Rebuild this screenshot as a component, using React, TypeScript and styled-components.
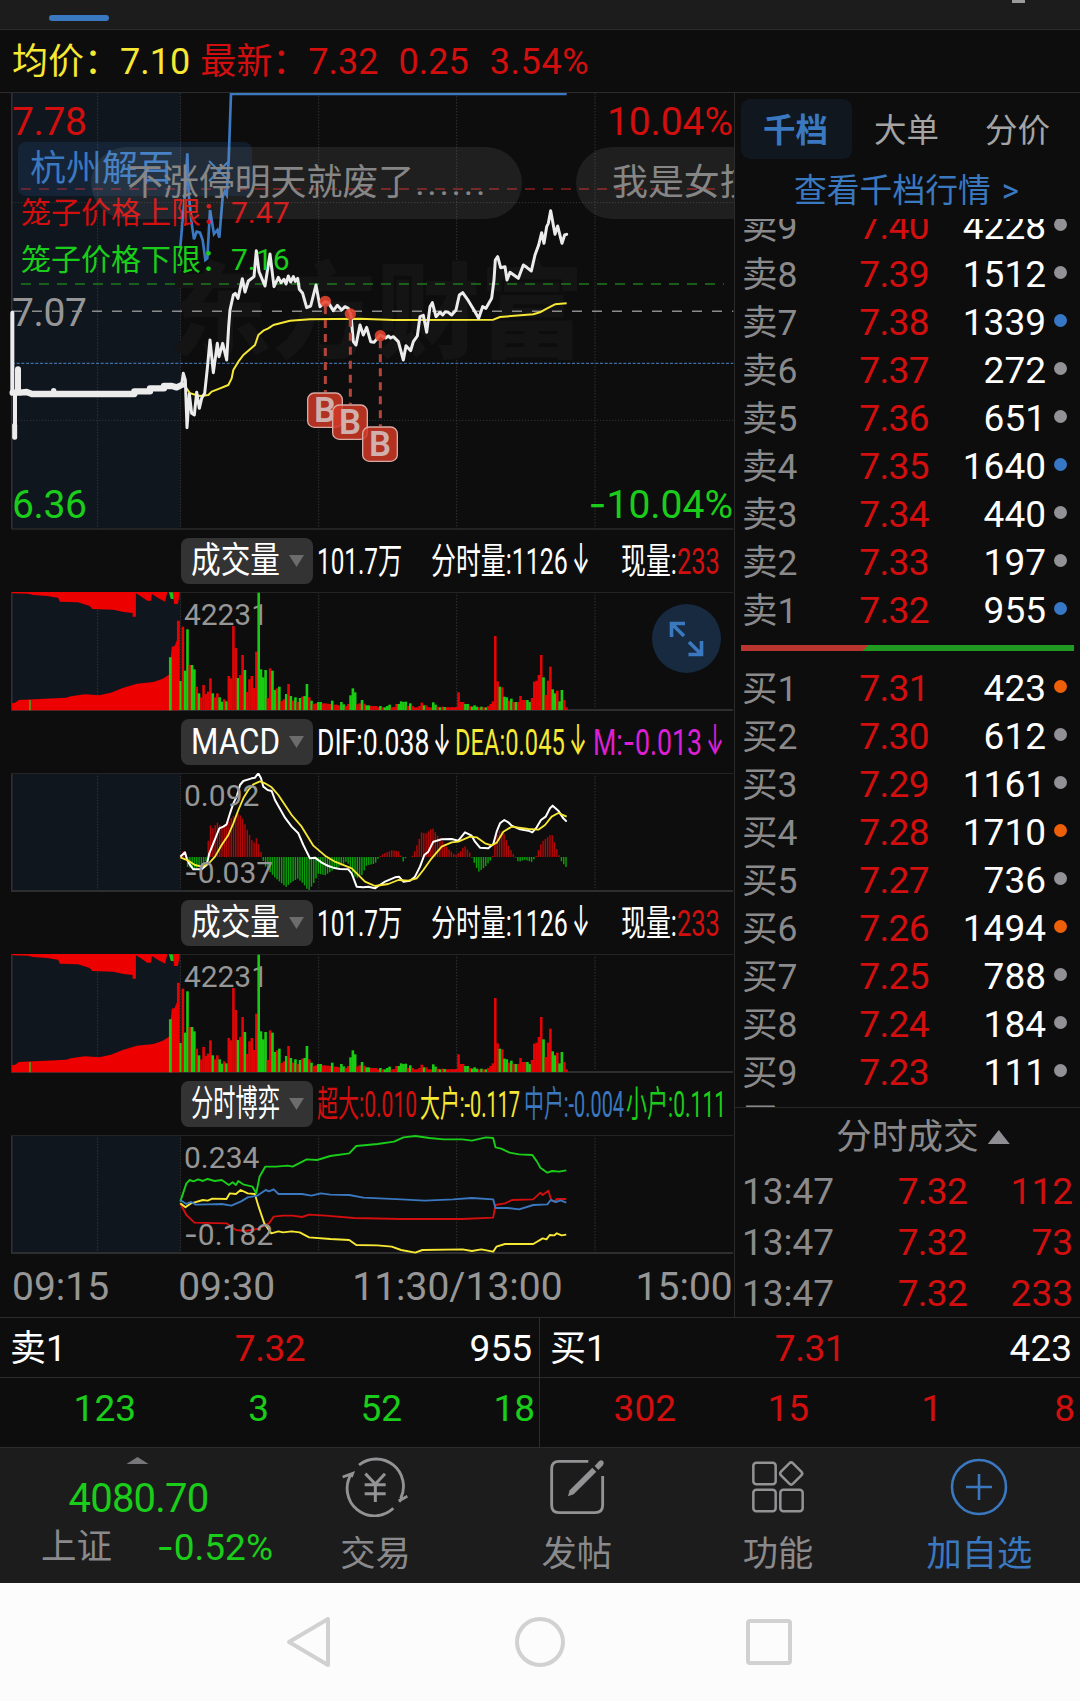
import React, { useLayoutEffect, useRef, useState } from "react";
import styled, { createGlobalStyle, css } from "styled-components";

const C = {
  bg: "#0d0d0d",
  bar: "#1c1c1c",
  line: "#2c2c2c",
  red: "#d20e0e",
  green: "#1acd1a",
  yellow: "#f7e834",
  blue: "#3a78c0",
  grey: "#969696",
  dim: "#8a8a8c",
  white: "#ffffff",
  magenta: "#dd1fd4",
  pre: "#10161e",
};

const FONT = `Roboto, "Noto Sans CJK SC", sans-serif`;

const Global = createGlobalStyle`
  html, body { margin: 0; padding: 0; background: ${C.bg}; }
  *, *::before, *::after { box-sizing: border-box; }
  svg { display: block; }
`;

/* ---------- text squeezed to a given width ---------- */

const FitBox = styled.span<{ $w: number }>`
  display: block;
  flex: none;
  width: ${(p) => p.$w}px;
  white-space: nowrap;
`;
const FitInner = styled.span`
  display: inline-block;
  transform-origin: 0 50%;
`;

function Fit({ w, children }: { w: number; children: React.ReactNode }) {
  const ref = useRef<HTMLSpanElement>(null);
  const [scale, setScale] = useState(1);
  useLayoutEffect(() => {
    if (ref.current && ref.current.offsetWidth) setScale(w / ref.current.offsetWidth);
  }, [w]);
  return (
    <FitBox $w={w}>
      <FitInner ref={ref} style={{ transform: `scaleX(${scale})` }}>
        {children}
      </FitInner>
    </FitBox>
  );
}

const Minus = styled.span`
  font-family: Inter, sans-serif;
`;
const Down = styled.span`
  font-family: Inter, sans-serif;
  font-size: 43px;
`;

/* ---------- page frame ---------- */

const Page = styled.div`
  width: 1080px;
  height: 1701px;
  overflow: hidden;
  background: ${C.bg};
  color: ${C.white};
  font: 400 37px/48px ${FONT};
  display: flex;
  flex-direction: column;
`;

const TopStrip = styled.div`
  height: 30px;
  flex: none;
  background: ${C.bar};
  border-bottom: 1px solid ${C.line};
  display: flex;
  justify-content: space-between;
  padding: 0 55px 0 49px;
`;
const ActiveMark = styled.div`
  width: 60px;
  height: 6px;
  margin-top: 15px;
  border-radius: 3px;
  background: ${C.blue};
`;
const CutGlyph = styled.div`
  width: 13px;
  height: 3px;
  background: #9a9a9a;
`;

const Quote = styled.div`
  height: 63px;
  flex: none;
  border-bottom: 1px solid ${C.line};
  display: flex;
  align-items: center;
  padding: 2px 0 0 12px;
  font-size: 36px;
`;
const QuoteItem = styled.span<{ $c: string; $gap?: number; $track?: number }>`
  color: ${(p) => p.$c};
  margin-right: ${(p) => p.$gap ?? 0}px;
  letter-spacing: ${(p) => p.$track ?? 0}px;
  white-space: nowrap;
`;

const Main = styled.div`
  height: 1225px;
  flex: none;
  display: grid;
  grid-template-columns: 735px 345px;
  border-bottom: 1px solid ${C.line};
`;
const Charts = styled.div`
  border-right: 1px solid ${C.line};
  overflow: hidden;
`;

/* ---------- main chart ---------- */

const MainChart = styled.div`
  position: relative;
  height: 437px;
  overflow: hidden;
`;
const StockTag = styled.div`
  position: absolute;
  left: 18px;
  top: 49px;
  width: 234px;
  height: 54px;
  padding-left: 12px;
  border-radius: 8px;
  background: rgba(42, 104, 176, 0.17);
  color: ${C.blue};
  font-size: 36px;
  line-height: 55px;
`;
const CloseMark = styled.svg`
  position: absolute;
  right: 22px;
  top: 18px;
`;
const Bubble = styled.div<{ $x: number; $w: number; $pad: number }>`
  position: absolute;
  left: ${(p) => p.$x}px;
  top: 54px;
  width: ${(p) => p.$w}px;
  height: 72px;
  padding-left: ${(p) => p.$pad}px;
  border-radius: 36px;
  background: rgba(255, 255, 255, 0.075);
  color: #868686;
  font-size: 35.9px;
  line-height: 73px;
  white-space: nowrap;
`;
const Dots = styled.span`
  letter-spacing: 2.7px;
  margin-left: 1px;
`;
const CageLabel = styled.div<{ $c: string; $y: number }>`
  position: absolute;
  left: 21px;
  top: ${(p) => p.$y}px;
  color: ${(p) => p.$c};
  font-size: 30px;
  line-height: 40px;
  white-space: nowrap;
`;

const Label = styled.text`
  font-family: ${FONT};
`;

const GRID_X = [97.6, 180.6, 318.7, 456.7, 595];

function Grid({ top, bottom }: { top: number; bottom: number }) {
  return (
    <g>
      <rect x={12} y={top} width={168.6} height={bottom - top} fill={C.pre} />
      {GRID_X.map((x) => (
        <line key={x} x1={x} x2={x} y1={top} y2={bottom} stroke="#333336" strokeWidth={1} strokeDasharray="1.5 1.5" />
      ))}
      <line x1={11.8} x2={11.8} y1={top} y2={bottom} stroke="#2e3033" strokeWidth={1.6} />
    </g>
  );
}

/* points are kept at three units per pixel */
const PRICE =
  "545,915 550,880 556,900 561,1043 568,942 575,1000 583,1005 590,937 598,985 605,955 614,940 622,865 630,780 640,878 652,790 657,830 668,790 680,840 686,740 690,690 700,645 706,640 714,655 727,596 735,636 745,603 762,590 769,512 777,575 795,618 810,522 822,620 835,592 843,608 852,598 858,612 865,588 872,606 880,590 886,604 893,595 898,628 908,640 920,683 932,678 948,615 960,680 975,665 985,668 1000,692 1012,676 1025,690 1035,680 1045,685 1053,705 1060,785 1068,795 1080,735 1090,765 1100,742 1112,785 1122,787 1140,765 1150,770 1157,774 1165,768 1172,774 1180,770 1195,785 1210,840 1218,797 1232,812 1240,785 1252,768 1260,710 1270,706 1280,757 1290,680 1297,668 1308,710 1320,697 1328,705 1336,695 1345,697 1355,705 1368,690 1378,645 1388,638 1405,662 1425,695 1436,715 1448,680 1458,685 1475,655 1482,600 1486,540 1493,530 1502,563 1515,560 1521,600 1530,577 1555,595 1570,555 1580,562 1594,573 1605,525 1616,495 1625,458 1632,490 1640,440 1645,430 1652,392 1665,463 1673,438 1686,490 1694,465 1700,463";
const AVERAGE =
  "545,915 555,918 570,940 600,948 625,945 635,935 660,925 685,915 695,895 700,870 715,845 730,825 765,795 775,765 790,752 805,745 820,735 870,722 930,718 1080,716 1180,720 1480,719 1500,711 1600,703 1620,697 1640,686 1665,673 1700,670";
const LIMIT =
  "541,500 548,420 556,330 562,220 566,340 575,430 582,478 590,455 600,458 608,480 616,540 622,535 630,390 642,462 652,450 658,473 668,350 674,335 680,345 686,240 693,42 1700,42";

const BUYS = [
  { x: 975, dot: 664, box: 937 },
  { x: 1050, dot: 702, box: 973 },
  { x: 1140, dot: 767, box: 1039 },
];

function PriceChart() {
  return (
    <MainChart>
      <svg width={734} height={437} viewBox="0 93 734 437">
        <Grid top={93} bottom={529} />
        <Label x={168} y={350} fontSize={104} fontWeight={900} fill="#141414" textLength={416}>
          东方财富
        </Label>
        <g transform="translate(0 80) scale(0.33333)" fill="none">
          <g strokeWidth={3} stroke="#333336" strokeDasharray="4 5">
            <path d="M36 368H2200M36 1021H2200" />
          </g>
          <path d="M36 1347H2200" stroke="#2a2a2a" strokeWidth={5} />
          <path d="M63 327H2172" stroke="#8b1c1c" strokeWidth={4.5} strokeDasharray="30 24" />
          <path d="M63 612H2172" stroke="#1d7a1d" strokeWidth={4.5} strokeDasharray="30 24" />
          <path d="M36 694H2200" stroke="#8c8c8c" strokeWidth={4.5} strokeDasharray="30 30" />
          <path d="M36 850H2200" stroke="#3f6da6" strokeWidth={3.5} strokeDasharray="9 5" />
          <polyline points={LIMIT} stroke={C.blue} strokeWidth={8} />
          <polyline points={AVERAGE} stroke={C.yellow} strokeWidth={6} strokeLinejoin="round" />
          <g stroke="#ececec" strokeLinejoin="round" strokeLinecap="round">
            <path d="M37 698V935M54 868V935M45 940V1072" strokeWidth={12} />
            <path d="M54 868V935" strokeWidth={18} />
            <path d="M44 1036V1072" strokeWidth={15} />
            <path d="M38 938L60 938L80 936L96 942H403V934H450V925H492V918H516L530 922L545 915" strokeWidth={19} />
            <path d="M161 932V940" strokeWidth={16} />
            <polyline points={PRICE} strokeWidth={9} />
          </g>
          {BUYS.map((b) => (
            <g key={b.x}>
              <circle cx={b.x + 1} cy={b.dot} r={17} fill="#e8452f" fillOpacity={0.88} />
              <path d={`M${b.x + 1} ${b.dot + 14}V${b.box}`} stroke="#b5453a" strokeWidth={9} strokeDasharray="24 18" />
            </g>
          ))}
          {BUYS.map((b) => (
            <g key={b.x}>
              <rect x={b.x - 52} y={b.box + 2} width={104} height={103} rx={20} fill="#d03826" fillOpacity={0.85} stroke="#d9aaa4" strokeWidth={4} />
              <Label x={b.x} y={b.box + 90} textAnchor="middle" fontSize={104} fontWeight={600} fill="#cfb0ac">
                B
              </Label>
            </g>
          ))}
        </g>
        <Label x={12} y={135} fontSize={39} fill={C.red} textLength={75}>7.78</Label>
        <Label x={12} y={326} fontSize={39} fill={C.grey} textLength={75}>7.07</Label>
        <Label x={12} y={518} fontSize={39} fill={C.green} textLength={75}>6.36</Label>
        <Label x={733} y={135} fontSize={39} fill={C.red} textAnchor="end" textLength={126}>10.04%</Label>
        <Label x={733} y={518} fontSize={39} fill={C.green} textAnchor="end">
          <tspan fontFamily="Inter">-</tspan>10.04%
        </Label>
      </svg>
      <StockTag>
        杭州解百
        <CloseMark width={22} height={22} viewBox="0 0 22 22" fill="none" stroke={C.blue} strokeWidth={2}>
          <path d="M1 1L21 21M21 1L1 21" />
        </CloseMark>
      </StockTag>
      <CageLabel $c={C.red} $y={100}>笼子价格上限：7.47</CageLabel>
      <CageLabel $c={C.green} $y={147}>笼子价格下限：7.16</CageLabel>
      <Bubble $x={91} $w={431} $pad={36}>
        不涨停明天就废了<Dots>......</Dots>
      </Bubble>
      <Bubble $x={576} $w={240} $pad={36}>我是女技</Bubble>
    </MainChart>
  );
}

/* ---------- indicator panels ---------- */

const Panel = styled.section`
  height: 181px;
  position: relative;
`;
const PanelHead = styled.div`
  height: 62px;
  display: flex;
  align-items: center;
  padding: 0 0 1px 181px;
  font-size: 36px;
`;
const Picker = styled.div`
  width: 132px;
  height: 46px;
  flex: none;
  display: flex;
  align-items: center;
  justify-content: space-between;
  padding: 1px 9px 0 10px;
  margin-right: 4px;
  border-radius: 8px;
  background: #333333;
  line-height: 46px;
`;
const Caret = styled.i<{ $up?: boolean; $w: number; $h: number; $c: string }>`
  display: block;
  width: ${(p) => p.$w}px;
  height: ${(p) => p.$h}px;
  background: ${(p) => p.$c};
  clip-path: ${(p) => (p.$up ? "polygon(50% 0, 100% 100%, 0 100%)" : "polygon(0 0, 100% 0, 50% 100%)")};
`;
const Value = styled.div<{ $c?: string; $gap?: number }>`
  display: flex;
  align-items: center;
  padding-top: 2px;
  color: ${(p) => p.$c ?? C.white};
  margin-right: ${(p) => p.$gap ?? 0}px;
`;
const ArrowCell = styled.span`
  margin: -3px 0 0 4px;
`;

const ExpandButton = styled.div`
  position: absolute;
  left: 652px;
  top: 74px;
  width: 69px;
  height: 69px;
  border-radius: 50%;
  background: #172a40;
`;

function PanelTitle({ children }: { children: string }) {
  return (
    <Picker>
      <Fit w={89}>{children}</Fit>
      <Caret $w={15} $h={12} $c="#6c6c6c" />
    </Picker>
  );
}

function Frame({ children }: { children: React.ReactNode }) {
  return (
    <svg width={734} height={119} viewBox="0 0 734 119">
      <Grid top={0} bottom={118} />
      <path d="M11 0.5H733" stroke="#242424" />
      <path d="M11 118H733" stroke="#2c2e30" strokeWidth={2} />
      {children}
    </svg>
  );
}

const VOLUME =
  "87g 250r 118g 242g 135r 135g 122g 70r 50g 38r 75r 48r 55r 95r 50g 38r 50r 38g 25g 32r 26g 102r 95r 252r 186r 96g 105r 165r 120g 54r 92r 102r 66r 175r 352g 122g 98g 120g 36r 125r 118g 60g 65r 70g 27r 32r 48g 78r 42g 28r 38g 24r 36g 40r 42g 78g 38r 28g 18r 20r 24g 24g 20r 20r 19r 18r 28g 16r 16r 14r 24g 17g 12r 18r 44g 65g 53g 17r 20r 30g 19r 14g 14g 12r 12r 12r 8r 12g 8r 8g 12g 16g 8r 9r 18r 18g 26g 24g 25g 12r 20g 12r 8r 8r 12r 22r 14g 14r 8r 8r 23g 16g 10r 8g 10r 9g 8r 8r 9r 8r 9r 53r 24r 24r 18g 18g 12r 10g 14g 10g 8r 10g 8r 8g 12r 18r 26r 222r 86r 70g 68r 40g 38g 28r 34g 24r 24g 24r 42r 30r 30r 30g 24g 36r 85r 88r 105r 165r 98g 45r 88r 130r 62g 50g 58r 26g 60g 30r 8r";
const BARS = VOLUME.split(" ").map((s) => ({ h: parseInt(s, 10) / 3, up: s.endsWith("r") }));
const STEP = 2.297;

function VolumeChart() {
  return (
    <Frame>
      <Label x={184} y={32.5} fontSize={30} fill={C.grey} textLength={84}>42231</Label>
      <g transform="translate(0 -62) scale(0.4719 0.33333)">
        <path
          fill="#ec0000"
          d="M25 541V520L32 518L40 510L140 503L150 499L180 493L210 496L235 488L260 474L290 461L325 456L345 446L358 434L364 350L370 348L375 330L375 272H381V541Z"
        />
        <path
          fill="#ec0000"
          d="M25 186V190L60 191L70 195L100 198L123 203L127 215L165 217L190 228L196 237L240 239L262 246L281 249V260H288V190L300 200L312 212H320L322 192L336 205L350 215L354 190V186H381V190L377 222H369L366 190V186Z"
        />
        <path fill="#18c818" d="M358 187H366L368 207H362ZM358 382H364V541H358ZM62 510H65V541H62Z" />
      </g>
      {BARS.map((b, i) => (
        <rect key={i} x={179.3 + i * STEP} y={118 - b.h} width={STEP + 0.3} height={b.h} fill={b.up ? "#e30505" : "#19cc12"} />
      ))}
    </Frame>
  );
}

const DIF =
  "16,800 30,787 35,805 42,820 55,838 80,838 95,825 103,790 115,760 125,735 133,715 145,710 155,703 165,670 175,640 185,620 195,585 205,573 230,565 240,563 250,550 258,565 265,590 278,600 290,603 300,630 330,683 350,710 370,730 385,765 405,805 420,803 440,818 460,828 475,833 495,837 520,838 530,850 545,890 565,892 580,890 600,895 610,888 630,875 660,862 672,860 685,875 705,872 720,860 735,830 748,795 760,785 775,755 800,748 830,747 850,752 870,727 890,737 900,755 915,773 940,775 955,762 965,725 975,700 988,690 1000,697 1010,707 1035,718 1060,722 1072,727 1085,712 1098,690 1112,680 1125,655 1133,647 1150,662 1165,685 1175,695";
const DEA =
  "16,802 40,812 60,825 80,830 100,822 120,800 140,765 160,735 175,700 190,660 205,625 220,600 235,583 255,574 270,580 290,592 310,615 330,645 350,675 380,710 415,767 450,797 480,815 530,835 545,850 570,875 600,888 640,882 670,870 700,872 725,865 745,840 770,805 800,770 830,757 850,755 885,740 905,742 930,760 950,766 965,758 985,725 1010,710 1060,717 1090,719 1110,705 1130,680 1150,669 1175,680";
const HIST: [number, number][] = [
  [16, 0], [22, 15], [30, 22], [33, 0], [37, -30], [60, -35], [80, -25], [95, -10], [97, 30], [106, 95], [115, 85],
  [125, 105], [140, 90], [155, 95], [170, 120], [188, 130], [200, 122], [215, 85], [235, 40], [245, 58], [258, 15],
  [262, -5], [272, -30], [298, -60], [315, -75], [333, -90], [350, -75], [368, -65], [385, -80], [400, -102],
  [415, -80], [430, -50], [450, -55], [480, -35], [500, -25], [515, -12], [527, -35], [543, -65], [560, -55],
  [575, -25], [600, -20], [612, 0], [625, 10], [650, 20], [670, 18], [680, 0], [684, -14], [694, 0], [710, 0],
  [720, 20], [740, 75], [752, 70], [772, 88], [790, 60], [800, 50], [820, 25], [840, 5], [855, 15], [868, 35],
  [885, 12], [892, -5], [910, -45], [930, -30], [948, -8], [952, 0], [960, 40], [970, 80], [985, 75], [1000, 35],
  [1015, 8], [1030, -15], [1050, -8], [1070, -15], [1082, 0], [1100, 45], [1130, 70], [1145, 25], [1153, 3],
  [1160, -15], [1180, -38],
];
function histAt(x: number) {
  const k = HIST.findIndex((p) => p[0] > x);
  if (k < 1) return 0;
  const [x0, y0] = HIST[k - 1];
  const [x1, y1] = HIST[k];
  return y0 + ((y1 - y0) * (x - x0)) / (x1 - x0);
}

function MacdChart() {
  return (
    <Frame>
      <g transform="translate(175 -183) scale(0.33333)" fill="none">
        {BARS.map((_, i) => {
          const x = 17 + i * 6.88;
          const h = histAt(x);
          return <rect key={i} x={x - 2} y={h > 0 ? 801 - h : 801} width={4.4} height={Math.abs(h)} fill={h > 0 ? "#b00707" : "#0c9c0c"} />;
        })}
        <g strokeLinejoin="round">
          <polyline points={DIF} stroke="#ffffff" strokeWidth={6} />
          <polyline points={DEA} stroke={C.yellow} strokeWidth={5.5} />
        </g>
      </g>
      <Label x={184} y={33} fontSize={30} fill={C.grey}>0.092</Label>
      <Label x={184} y={110} fontSize={30} fill={C.grey}>
        <tspan fontFamily="Inter">-</tspan>0.037
      </Label>
    </Frame>
  );
}

const SMALL =
  "382,395 395,340 402,330 410,334 420,328 430,333 440,327 455,333 470,330 485,345 493,337 500,345 505,333 515,343 535,350 543,370 550,320 562,290 585,290 610,287 620,290 650,268 672,270 700,258 740,250 755,228 800,222 835,215 855,202 880,198 910,204 940,208 980,208 1000,212 1030,202 1045,204 1050,232 1062,236 1080,248 1100,253 1128,255 1138,275 1145,293 1160,308 1170,303 1185,305 1200,301";
const LARGE =
  "382,400 393,412 405,400 430,390 440,392 450,386 480,387 487,370 500,372 510,360 525,370 540,372 548,410 560,460 575,490 590,484 600,487 618,484 635,487 655,502 700,507 740,510 755,525 800,526 830,530 850,540 880,548 895,540 980,538 1000,543 1020,538 1045,545 1052,530 1070,522 1130,522 1150,505 1158,508 1165,495 1175,496 1180,490 1190,496 1200,494";
const MIDDLE =
  "382,390 395,402 405,396 415,404 440,403 470,402 490,407 510,395 525,382 545,377 563,360 570,364 580,358 590,372 640,372 660,377 680,370 700,374 740,375 770,383 850,388 900,392 960,388 1000,384 1045,388 1050,414 1075,414 1100,418 1130,405 1160,403 1167,390 1178,396 1188,391 1200,398";
const SUPER =
  "382,400 395,435 412,458 480,460 500,480 520,483 545,477 570,460 580,440 600,437 620,437 640,441 655,434 690,437 750,444 850,447 980,447 1045,443 1050,405 1070,400 1085,390 1130,388 1145,368 1150,375 1162,362 1168,390 1175,395 1180,387 1200,387";

function GameChart() {
  return (
    <Frame>
      <g transform="translate(0 -65) scale(0.4719 0.33333)" fill="none" strokeLinejoin="round">
        {[
          [SUPER, C.red],
          [LARGE, C.yellow],
          [SMALL, C.green],
          [MIDDLE, C.blue],
        ].map(([pts, c]) => (
          <polyline key={c} points={pts} stroke={c} strokeWidth={1.9} vectorEffect="non-scaling-stroke" />
        ))}
      </g>
      <Label x={184} y={32.5} fontSize={30} fill={C.grey}>0.234</Label>
      <Label x={184} y={109.5} fontSize={30} fill={C.grey}>
        <tspan fontFamily="Inter">-</tspan>0.182
      </Label>
    </Frame>
  );
}

function WithArrow({ w, c, gap, children }: { w: number; c?: string; gap?: number; children: React.ReactNode }) {
  return (
    <Value $c={c} $gap={gap}>
      <Fit w={w}>{children}</Fit>
      <ArrowCell>
        <Fit w={18}>
          <Down>↓</Down>
        </Fit>
      </ArrowCell>
    </Value>
  );
}

function VolumePanel({ expand }: { expand?: boolean }) {
  return (
    <Panel>
      <PanelHead>
        <PanelTitle>成交量</PanelTitle>
        <Value $gap={29}>
          <Fit w={85}>101.7万</Fit>
        </Value>
        <WithArrow w={137} gap={31}>分时量:1126</WithArrow>
        <Value>
          <Fit w={56}>现量:</Fit>
        </Value>
        <Value $c={C.red}>
          <Fit w={43}>233</Fit>
        </Value>
      </PanelHead>
      <VolumeChart />
      {expand && (
        <ExpandButton>
          <svg width={69} height={69} viewBox="0 0 69 69" fill="none" stroke={C.blue} strokeWidth={3.6}>
            <path d="M19.5 33V19.5H33M19.5 19.5L32 32M49.5 37V50.5H36.5M49.5 50.5L37 38" />
          </svg>
        </ExpandButton>
      )}
    </Panel>
  );
}

const TimeAxis = styled.div`
  height: 62px;
  display: flex;
  align-items: center;
  padding: 4px 1px 0 12px;
  font-size: 39px;
  color: ${C.grey};
`;
const Tick = styled.span<{ $gap?: number }>`
  margin-right: ${(p) => p.$gap ?? 0}px;
`;

/* ---------- order book ---------- */

const Book = styled.aside`
  display: flex;
  flex-direction: column;
  overflow: hidden;
`;
const Tabs = styled.div`
  height: 66px;
  flex: none;
  display: flex;
  padding: 6px 6px 0;
`;
const Tab = styled.div<{ $on?: boolean }>`
  width: 111px;
  height: 60px;
  border-radius: 9px;
  padding-right: 2px;
  text-align: center;
  font-size: 32.5px;
  line-height: 64px;
  color: #a4a4a4;
  ${(p) =>
    p.$on &&
    css`
      background: #10171f;
      color: ${C.blue};
      font-weight: 700;
    `}
`;
const MoreLink = styled.div`
  height: 60px;
  flex: none;
  padding-left: 59px;
  font-size: 32.8px;
  line-height: 65px;
  color: ${C.blue};
  white-space: nowrap;
`;
const More = styled.span`
  margin-left: 11px;
`;
const Levels = styled.div`
  height: 889px;
  flex: none;
  overflow: hidden;
  border-bottom: 1px solid #262626;
`;
const Asks = styled.div`
  margin-top: -16px;
`;
const Level = styled.div`
  height: 48px;
  display: grid;
  grid-template-columns: 72px 115px 117px 1fr;
  align-items: center;
  padding-left: 7px;
`;
const LevelName = styled.span`
  font-size: 35.5px;
  color: ${C.dim};
  white-space: nowrap;
`;
const Num = styled.span<{ $c: string; $track?: number }>`
  color: ${(p) => p.$c};
  letter-spacing: ${(p) => p.$track ?? 0}px;
  text-align: right;
`;
const Dot = styled.i<{ $c: string }>`
  width: 13px;
  height: 13px;
  margin: -5px 0 0 8px;
  border-radius: 50%;
  background: ${(p) => p.$c};
`;
const Ratio = styled.div`
  height: 6px;
  margin: 10px 6px 14px;
  background: linear-gradient(135deg, #b83530 0 90px, #209a20 90.5px);
`;

const DOT = { n: "#919196", b: "#3678c6", o: "#ee5f0a" };
type Row = [string, string, string, keyof typeof DOT];
const ASKS: Row[] = [
  ["卖9", "7.40", "4228", "n"],
  ["卖8", "7.39", "1512", "n"],
  ["卖7", "7.38", "1339", "b"],
  ["卖6", "7.37", "272", "n"],
  ["卖5", "7.36", "651", "n"],
  ["卖4", "7.35", "1640", "b"],
  ["卖3", "7.34", "440", "n"],
  ["卖2", "7.33", "197", "n"],
  ["卖1", "7.32", "955", "b"],
];
const BIDS: Row[] = [
  ["买1", "7.31", "423", "o"],
  ["买2", "7.30", "612", "n"],
  ["买3", "7.29", "1161", "n"],
  ["买4", "7.28", "1710", "o"],
  ["买5", "7.27", "736", "n"],
  ["买6", "7.26", "1494", "o"],
  ["买7", "7.25", "788", "n"],
  ["买8", "7.24", "184", "n"],
  ["买9", "7.23", "111", "n"],
];

function LevelRow({ row }: { row: Row }) {
  return (
    <Level>
      <LevelName>{row[0]}</LevelName>
      <Num $c={C.red} $track={-0.6}>{row[1]}</Num>
      <Num $c={C.white}>{row[2]}</Num>
      <Dot $c={DOT[row[3]]} />
    </Level>
  );
}

const TradesHead = styled.div`
  height: 58px;
  flex: none;
  display: flex;
  align-items: center;
  padding-left: 101px;
  gap: 9px;
  font-size: 35.7px;
  color: ${C.dim};
`;
const Trade = styled.div`
  height: 51px;
  flex: none;
  display: grid;
  grid-template-columns: 90px 135px 106px;
  align-items: center;
  padding-left: 7px;
  color: ${C.red};
`;
const TradeTime = styled.span`
  color: ${C.dim};
`;

/* ---------- queue table ---------- */

const Queue = styled.div`
  height: 129px;
  flex: none;
  display: grid;
  grid-template-columns: 540px 540px;
`;
const Side = styled.div`
  border-right: 1px solid ${C.line};
  &:last-child {
    border-right: 0;
  }
`;
const SideHead = styled.div`
  height: 60px;
  border-bottom: 1px solid ${C.line};
  display: grid;
  grid-template-columns: 80px 215px 227px;
  align-items: center;
  padding: 3px 0 0 10px;
`;
const LevelTitle = styled.span`
  font-size: 36px;
  white-space: nowrap;
`;
const Orders = styled.div<{ $c: string }>`
  height: 60px;
  display: grid;
  grid-template-columns: repeat(4, 133px);
  align-items: center;
  padding: 2px 0 0 3px;
  text-align: right;
  color: ${(p) => p.$c};
`;

/* ---------- toolbar and system bar ---------- */

const Toolbar = styled.div`
  height: 136px;
  flex: none;
  display: grid;
  grid-template-columns: 275px repeat(4, 201.25px);
  border-top: 1px solid ${C.line};
  background: ${C.bar};
`;
const IndexBox = styled.div`
  display: flex;
  flex-direction: column;
  align-items: center;
  padding-top: 9px;
  color: ${C.green};
`;
const IndexValue = styled.div`
  margin: 11px 0 0 2px;
  font-size: 40px;
  line-height: 48px;
  letter-spacing: -0.8px;
`;
const IndexRow = styled.div`
  width: 232px;
  margin: 0 0 0 41px;
  display: flex;
  justify-content: space-between;
  align-self: flex-start;
`;
const IndexName = styled.span`
  font-size: 35.5px;
  color: ${C.dim};
`;
const Tool = styled.div<{ $c: string }>`
  display: flex;
  flex-direction: column;
  align-items: center;
  padding-top: 9px;
  font-size: 35.3px;
  line-height: 48px;
  color: ${(p) => p.$c};
`;
const ToolName = styled.div`
  margin-top: 13px;
`;

const SystemBar = styled.div`
  flex: 1;
  display: flex;
  justify-content: center;
  align-items: center;
  gap: 180px;
  background: #fcfcfc;
`;

const GREY = "#939396";

const TradeIcon = () => (
  <svg width={66.7} height={60} viewBox="22 36 200 180" fill="none" stroke={GREY} strokeWidth={8.5}>
    <path d="M73 60A82 82 0 0 1 198 160M194 170L202 158M192 168L218 154M176 190A82 82 0 0 1 50 87M24 96L54 85L50 96" />
    <path d="M92 86L122 117L151 86M90 119H153M90 146H153M122 117V171" strokeWidth={9} />
  </svg>
);
const PostIcon = () => (
  <svg width={60} height={60} viewBox="636 36 180 180">
    <path d="M760 49H672Q650 49 650 71V181Q650 203 672 203H780Q803 203 803 181V93" fill="none" stroke={GREY} strokeWidth={8.5} />
    <path d="M772 68L784 80L716 148L699 154L704 136Z" fill={GREY} />
    <path d="M779 63L792 49Q798 43 804 48Q809 54 804 61L790 75Z" fill={GREY} />
  </svg>
);
const AppsIcon = () => (
  <svg width={60} height={60} viewBox="1240 36 180 180" fill="none" stroke={GREY} strokeWidth={7.5}>
    <rect x={1256} y={53} width={67} height={65} rx={9} />
    <rect x={1256} y={134} width={67} height={65} rx={9} />
    <rect x={1337} y={134} width={67} height={65} rx={9} />
    <rect x={1344} y={60} width={51} height={51} rx={8} transform="rotate(45 1369.5 85.5)" />
  </svg>
);
const AddIcon = () => (
  <svg width={60} height={60} viewBox="0 0 60 60" fill="none" stroke={C.blue} strokeWidth={2.6}>
    <circle cx={30} cy={30} r={27} />
    <path d="M30 17V43M17 30H43" />
  </svg>
);

export default function App() {
  return (
    <Page>
      <Global />
      <TopStrip>
        <ActiveMark />
        <CutGlyph />
      </TopStrip>
      <Quote>
        <QuoteItem $c={C.yellow}>均价：</QuoteItem>
        <QuoteItem $c={C.yellow} $gap={10}>7.10</QuoteItem>
        <QuoteItem $c={C.red}>最新：</QuoteItem>
        <QuoteItem $c={C.red} $gap={20}>7.32</QuoteItem>
        <QuoteItem $c={C.red} $gap={21}>0.25</QuoteItem>
        <QuoteItem $c={C.red} $track={0.6}>3.54%</QuoteItem>
      </Quote>
      <Main>
        <Charts>
          <PriceChart />
          <VolumePanel expand />
          <Panel>
            <PanelHead>
              <PanelTitle>MACD</PanelTitle>
              <WithArrow w={112} gap={4}>DIF:0.038</WithArrow>
              <WithArrow w={110} c={C.yellow} gap={6}>DEA:0.045</WithArrow>
              <WithArrow w={109} c={C.magenta}>
                M:<Minus>-</Minus>0.013
              </WithArrow>
            </PanelHead>
            <MacdChart />
          </Panel>
          <VolumePanel />
          <Panel>
            <PanelHead>
              <PanelTitle>分时博弈</PanelTitle>
              <Value $c={C.red} $gap={3}>
                <Fit w={100}>超大:0.010</Fit>
              </Value>
              <Value $c={C.yellow} $gap={4}>
                <Fit w={100}>大户:-0.117</Fit>
              </Value>
              <Value $c={C.blue} $gap={2}>
                <Fit w={100}>中户:-0.004</Fit>
              </Value>
              <Value $c={C.green}>
                <Fit w={100}>小户:0.111</Fit>
              </Value>
            </PanelHead>
            <GameChart />
          </Panel>
          <TimeAxis>
            <Tick $gap={69}>09:15</Tick>
            <Tick $gap={77}>09:30</Tick>
            <Tick $gap={73}>11:30/13:00</Tick>
            <Tick>15:00</Tick>
          </TimeAxis>
        </Charts>
        <Book>
          <Tabs>
            <Tab $on>千档</Tab>
            <Tab>大单</Tab>
            <Tab>分价</Tab>
          </Tabs>
          <MoreLink>
            查看千档行情<More>&gt;</More>
          </MoreLink>
          <Levels>
            <Asks>
              {ASKS.map((r) => (
                <LevelRow key={r[0]} row={r} />
              ))}
            </Asks>
            <Ratio />
            {BIDS.map((r) => (
              <LevelRow key={r[0]} row={r} />
            ))}
            <Level>
              <LevelName>买10</LevelName>
            </Level>
          </Levels>
          <TradesHead>
            分时成交
            <Caret $up $w={22} $h={14} $c="#8f8f93" />
          </TradesHead>
          {["112", "73", "233"].map((v) => (
            <Trade key={v}>
              <TradeTime>13:47</TradeTime>
              <Num $c={C.red} $track={-0.7}>7.32</Num>
              <Num $c={C.red}>{v}</Num>
            </Trade>
          ))}
        </Book>
      </Main>
      <Queue>
        <Side>
          <SideHead>
            <LevelTitle>卖1</LevelTitle>
            <Num $c={C.red} $track={-0.5}>7.32</Num>
            <Num $c={C.white}>955</Num>
          </SideHead>
          <Orders $c={C.green}>
            <span>123</span>
            <span>3</span>
            <span>52</span>
            <span>18</span>
          </Orders>
        </Side>
        <Side>
          <SideHead>
            <LevelTitle>买1</LevelTitle>
            <Num $c={C.red} $track={-0.5}>7.31</Num>
            <Num $c={C.white}>423</Num>
          </SideHead>
          <Orders $c={C.red}>
            <span>302</span>
            <span>15</span>
            <span>1</span>
            <span>8</span>
          </Orders>
        </Side>
      </Queue>
      <Toolbar>
        <IndexBox>
          <Caret $up $w={22} $h={7} $c="#77777a" />
          <IndexValue>4080.70</IndexValue>
          <IndexRow>
            <IndexName>上证</IndexName>
            <span>
              <Minus>-</Minus>0.52%
            </span>
          </IndexRow>
        </IndexBox>
        <Tool $c={C.dim}>
          <TradeIcon />
          <ToolName>交易</ToolName>
        </Tool>
        <Tool $c={C.dim}>
          <PostIcon />
          <ToolName>发帖</ToolName>
        </Tool>
        <Tool $c={C.dim}>
          <AppsIcon />
          <ToolName>功能</ToolName>
        </Tool>
        <Tool $c={C.blue}>
          <AddIcon />
          <ToolName>加自选</ToolName>
        </Tool>
      </Toolbar>
      <SystemBar>
        <svg width={50} height={54} viewBox="1 0 50 54" fill="none" stroke="#d1d1d1" strokeWidth={4} strokeLinejoin="round">
          <path d="M44 4V50L5 27Z" />
        </svg>
        <svg width={50} height={54} viewBox="0 0 50 54" fill="none" stroke="#d1d1d1" strokeWidth={4}>
          <circle cx={25} cy={27} r={23} />
        </svg>
        <svg width={50} height={54} viewBox="1 0 50 54" fill="none" stroke="#d1d1d1" strokeWidth={4}>
          <rect x={4} y={6} width={42} height={42} rx={2} />
        </svg>
      </SystemBar>
    </Page>
  );
}
